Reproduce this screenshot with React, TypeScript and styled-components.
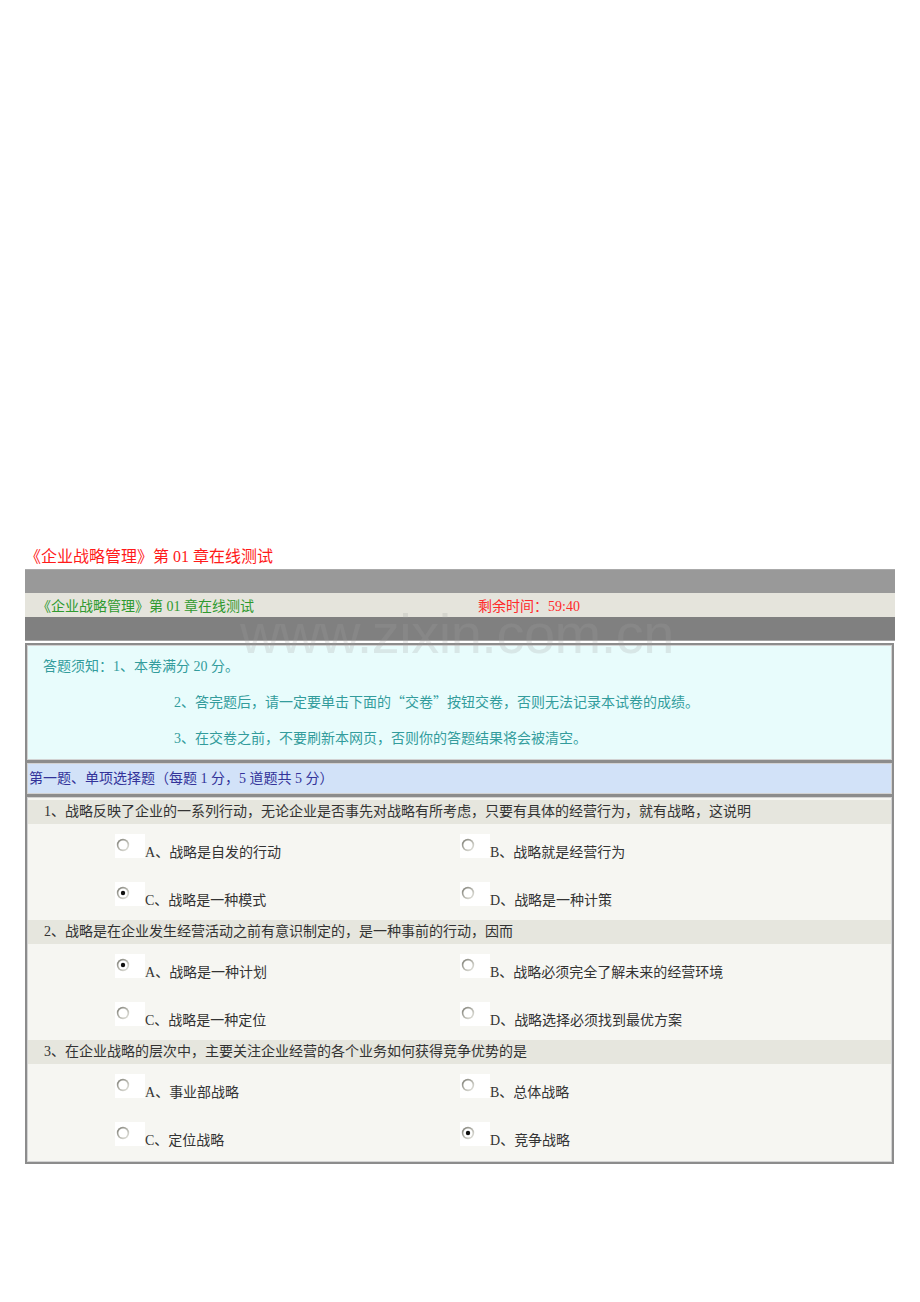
import styled, { createGlobalStyle } from 'styled-components'

const GlobalStyle = createGlobalStyle`
  html, body {
    margin: 0;
    padding: 0;
    background: #ffffff;
  }
  body {
    font-family: 'Liberation Serif', 'Noto Sans CJK SC', serif;
    font-size: 14px;
    color: #333333;
  }
`

type Choice = { key: string; text: string }
type Question = { no: number; title: string; options: Choice[]; checked: string }

const questions: Question[] = [
  {
    no: 1,
    title:
      '战略反映了企业的一系列行动，无论企业是否事先对战略有所考虑，只要有具体的经营行为，就有战略，这说明',
    options: [
      { key: 'A', text: '战略是自发的行动' },
      { key: 'B', text: '战略就是经营行为' },
      { key: 'C', text: '战略是一种模式' },
      { key: 'D', text: '战略是一种计策' },
    ],
    checked: 'C',
  },
  {
    no: 2,
    title: '战略是在企业发生经营活动之前有意识制定的，是一种事前的行动，因而',
    options: [
      { key: 'A', text: '战略是一种计划' },
      { key: 'B', text: '战略必须完全了解未来的经营环境' },
      { key: 'C', text: '战略是一种定位' },
      { key: 'D', text: '战略选择必须找到最优方案' },
    ],
    checked: 'A',
  },
  {
    no: 3,
    title: '在企业战略的层次中，主要关注企业经营的各个业务如何获得竞争优势的是',
    options: [
      { key: 'A', text: '事业部战略' },
      { key: 'B', text: '总体战略' },
      { key: 'C', text: '定位战略' },
      { key: 'D', text: '竞争战略' },
    ],
    checked: 'D',
  },
]

const RadioMark = ({ checked }: { checked: boolean }) => (
  <svg width="14" height="14" viewBox="0 0 14 14">
    <defs>
      <linearGradient id="ring" x1="0" y1="0" x2="1" y2="1">
        <stop offset="0" stopColor="#7a7a72" />
        <stop offset="0.5" stopColor="#b4b4ac" />
        <stop offset="1" stopColor="#ecece6" />
      </linearGradient>
    </defs>
    <circle cx="7" cy="7" r="6.2" fill="url(#ring)" />
    <circle cx="7" cy="7" r="4.6" fill="#ffffff" />
    {checked && <circle cx="7" cy="7" r="2.2" fill="#111111" />}
  </svg>
)

export default function App() {
  return (
    <Page>
      <GlobalStyle />
      <PageTitle>《企业战略管理》第 01 章在线测试</PageTitle>

      <Sheet>
        <Watermark>www.zixin.com.cn</Watermark>

        <TopBar />
        <InfoBar>
          <CourseName>《企业战略管理》第 01 章在线测试</CourseName>
          <Timer>剩余时间：59:40</Timer>
        </InfoBar>
        <DarkBar />

        <Panel $bg="#e8fcfc" $first>
          <Notice>
            <NoticeLine $indent={16}>答题须知：1、本卷满分 20 分。</NoticeLine>
            <NoticeLine $indent={147}>
              2、答完题后，请一定要单击下面的<Wide>“交卷”</Wide>按钮交卷，否则无法记录本试卷的成绩。
            </NoticeLine>
            <NoticeLine $indent={147}>3、在交卷之前，不要刷新本网页，否则你的答题结果将会被清空。</NoticeLine>
          </Notice>
        </Panel>

        <Panel $bg="#d2e2f8">
          <SectionTitle>第一题、单项选择题（每题 1 分，5 道题共 5 分）</SectionTitle>
        </Panel>

        <Panel $bg="#f6f6f2">
          <QuestionList>
            {questions.map((q) => (
              <div key={q.no}>
                <QuestionHead>
                  {q.no}、{q.title}
                </QuestionHead>
                <OptionGrid>
                  {q.options.map((o) => (
                    <Option key={o.key}>
                      <RadioBox>
                        <RadioMark checked={o.key === q.checked} />
                      </RadioBox>
                      <OptionLabel>
                        {o.key}、{o.text}
                      </OptionLabel>
                    </Option>
                  ))}
                </OptionGrid>
              </div>
            ))}
          </QuestionList>
        </Panel>
      </Sheet>
    </Page>
  )
}

const Page = styled('div')`
  padding: 547px 0 135px 25px;
  width: 870px;
`

const PageTitle = styled('div')`
  margin: 0 0 2px 0;
  font-size: 16px;
  line-height: 20px;
  color: #ff1a1a;
`

const Sheet = styled('div')`
  position: relative;
  width: 870px;
`

const Watermark = styled('div')`
  position: absolute;
  left: 215px;
  top: 37px;
  z-index: 2;
  font-family: 'Liberation Sans', Arial, sans-serif;
  font-size: 56px;
  line-height: 1;
  letter-spacing: -0.5px;
  color: rgba(160, 160, 160, 0.22);
  pointer-events: none;
  white-space: nowrap;
`

const TopBar = styled('div')`
  height: 24px;
  background: #999999;
  box-shadow: inset 0 1px 0 #aaaaaa;
`

const InfoBar = styled('div')`
  display: flex;
  align-items: center;
  height: 24px;
  background: #e5e4dc;
`

const CourseName = styled('div')`
  width: 441px;
  padding-left: 12px;
  color: #2f9a2f;
  font-size: 14px;
`

const Timer = styled('div')`
  color: #ff2a2a;
  font-size: 14px;
`

const DarkBar = styled('div')`
  height: 24px;
  background: #808080;
  box-shadow: inset 0 -1px 0 #a4a4a4;
`

const Panel = styled('div')<{ $bg: string; $first?: boolean }>`
  margin-top: ${(p) => (p.$first ? '2px' : '-1px')};
  margin-right: 1px;
  border: 2px solid #8c8c8c;
  background: ${(p) => p.$bg};
  box-shadow: inset 0 0 0 1px #d2d2d2;
`

const Notice = styled('div')`
  padding: 4px 0 3px 0;
`

const NoticeLine = styled('div')<{ $indent: number }>`
  padding-left: ${(p) => p.$indent}px;
  height: 36px;
  line-height: 36px;
  font-size: 14px;
  color: #339c9c;
  white-space: nowrap;
`

const Wide = styled('span')`
  font-family: 'Noto Sans CJK SC', sans-serif;
  line-height: 1;
`

const SectionTitle = styled('div')`
  height: 31px;
  line-height: 31px;
  padding-left: 2px;
  font-size: 14px;
  color: #33339a;
`

const QuestionList = styled('div')`
  padding: 3px 0 2px 0;
`

const QuestionHead = styled('div')`
  height: 24px;
  line-height: 24px;
  padding-left: 16px;
  margin: 0 1px;
  background: #e6e6de;
  font-size: 14px;
  color: #333333;
`

const OptionGrid = styled('div')`
  display: grid;
  grid-template-columns: 345px 1fr;
  padding-left: 88px;
`

const Option = styled('div')`
  display: flex;
  align-items: flex-end;
  height: 48px;
  box-sizing: border-box;
  padding: 10px 0 14px 0;
`

const RadioBox = styled('div')`
  width: 30px;
  height: 24px;
  flex-shrink: 0;
  background: #ffffff;
  padding: 4px 0 0 1px;
  box-sizing: border-box;
  line-height: 0;
`

const OptionLabel = styled('span')`
  font-size: 14px;
  line-height: 14px;
  margin-bottom: -2px;
  color: #333333;
  white-space: nowrap;
`
